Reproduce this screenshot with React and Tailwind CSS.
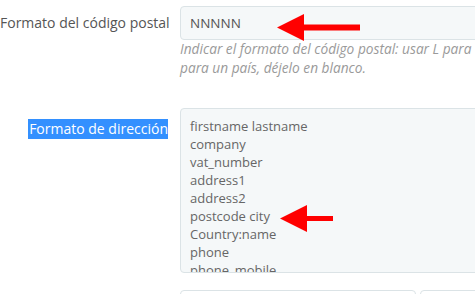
import { useState } from "react";

const addressLines = [
  "firstname lastname",
  "company",
  "vat_number",
  "address1",
  "address2",
  "postcode city",
  "Country:name",
  "phone",
  "phone_mobile",
];

const RedArrow = ({ className, width, height, headWidth, shaft }) => {
  const mid = height / 2;
  return (
    <svg
      className={className}
      width={width}
      height={height}
      viewBox={`0 0 ${width} ${height}`}
    >
      <polygon points={`0,${mid} ${headWidth},0 ${headWidth},${height}`} fill="#ff0000" />
      <rect
        x={headWidth - 1}
        y={mid - shaft / 2}
        width={width - headWidth + 1}
        height={shaft}
        fill="#ff0000"
      />
    </svg>
  );
};

const App = () => {
  const [postcode] = useState("NNNNN");

  return (
    <div className="relative w-[475px] h-[294px] overflow-hidden bg-white font-['Open_Sans',sans-serif] text-[#555]">
      {/* Postcode format */}
      <div className="flex gap-[12px] pt-[6px]">
        <label className="w-[168px] shrink-0 text-right text-[14px] leading-[34px] text-[#555] whitespace-nowrap">
          Formato del código postal
        </label>
        <div className="w-[320px] shrink-0">
          <div className="h-[34px] rounded-[4px] border border-[#dbe3e6] bg-[#f5f8f9] px-[9px] text-[13.5px] leading-[32px] text-[#555]">
            {postcode}
          </div>
          <p className="-mt-[1px] text-[13.7px] leading-[19px] italic text-[#9a9a9a] whitespace-nowrap">
            Indicar el formato del código postal: usar L para
            <br />
            para un país, déjelo en blanco.
          </p>
        </div>
      </div>

      {/* Address format */}
      <div className="flex gap-[12px] mt-[31px]">
        <div className="w-[168px] shrink-0 text-right pt-[8px]">
          <span className="bg-[#3390ff] text-white text-[14px] leading-[20px] inline-block pl-px">
            Formato de dirección
          </span>
        </div>
        <div className="w-[320px] shrink-0">
          <div className="h-[165px] overflow-hidden rounded-[4px] border border-[#dbe3e6] bg-[#f5f8f9] px-[9px] pt-[8px] text-[13px] leading-[18px] text-[#666]">
            {addressLines.map((line) => (
              <div key={line}>{line}</div>
            ))}
          </div>
        </div>
      </div>

      {/* Next fields */}
      <div className="flex gap-[4px] mt-[17px] pl-[180px]">
        <div className="w-[236px] h-[40px] shrink-0 rounded-[4px] border border-[#dbe3e6] bg-white" />
        <div className="w-[100px] h-[40px] shrink-0 rounded-[4px] border border-[#dbe3e6] bg-white" />
      </div>

      {/* Annotations */}
      <RedArrow
        className="absolute left-[277px] top-[14px]"
        width={83}
        height={27}
        headWidth={27}
        shaft={6}
      />
      <RedArrow
        className="absolute left-[280px] top-[205px]"
        width={53}
        height={27}
        headWidth={27}
        shaft={5}
      />
    </div>
  );
};

export default App;
